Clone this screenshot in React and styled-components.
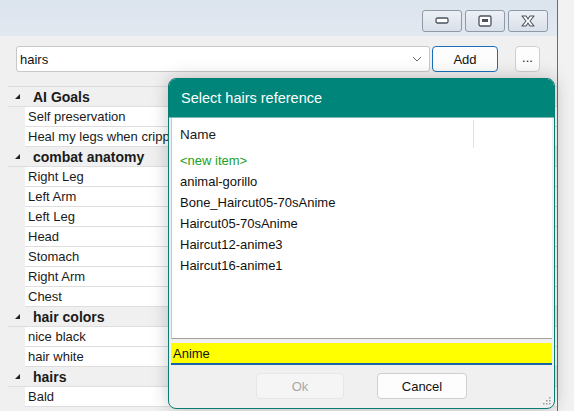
import React from "react";
import styled, { createGlobalStyle } from "styled-components";

const GlobalStyle = createGlobalStyle`
  html, body {
    margin: 0;
    padding: 0;
    background: #f0f0f0;
    font-family: "Liberation Sans", Arial, sans-serif;
  }
`;

const Screen = styled.div`
  position: relative;
  display: flex;
  width: 574px;
  height: 411px;
  overflow: hidden;
  background: linear-gradient(90deg, #e4e4e4, #f2f2f2);
`;

const Window = styled.div`
  width: 557px;
  display: flex;
  flex-direction: column;
  border-right: 1px solid #6c6c6c;
  background: #f0f0f0;
  overflow: hidden;
`;

const TitleBar = styled.div`
  height: 36px;
  flex-shrink: 0;
  box-sizing: border-box;
  display: flex;
  justify-content: flex-end;
  gap: 3px;
  padding: 10px 9px 0 0;
  background: linear-gradient(180deg, #dbe3ec 0%, #e3e9f1 100%);
`;

const CaptionButton = styled.div`
  width: 40px;
  height: 22px;
  box-sizing: border-box;
  border: 1px solid #8f9aa8;
  border-radius: 3px;
  background: linear-gradient(180deg, #edf1f6, #d9e0e9);
  display: flex;
  align-items: center;
  justify-content: center;
`;

const Toolbar = styled.div`
  flex-shrink: 0;
  display: flex;
  align-items: center;
  padding: 10px 0 0 16px;
  height: 26px;
`;

const Combo = styled.div`
  width: 414px;
  height: 26px;
  box-sizing: border-box;
  background: #fff;
  border: 1px solid #c8c8c8;
  border-radius: 3px;
  display: flex;
  align-items: center;
  justify-content: space-between;
  padding: 0 7px 0 3px;
  font-size: 13px;
  color: #111;
`;

const Button = styled.div`
  flex-shrink: 0;
  height: 26px;
  width: ${(p) => p.$w}px;
  margin-left: ${(p) => p.$ml}px;
  box-sizing: border-box;
  border: 1px solid ${(p) => (p.$focus ? "#1a6fb8" : p.$disabled ? "#e6e6e6" : "#cfcfcf")};
  border-radius: 4px;
  background: ${(p) => (p.$disabled ? "#f5f5f5" : "#fdfdfd")};
  color: ${(p) => (p.$disabled ? "#a8a8a8" : "#111")};
  font-size: 13px;
  display: flex;
  align-items: center;
  justify-content: center;
  padding-bottom: ${(p) => (p.$dots ? "4px" : "0")};
`;

const Grid = styled.div`
  flex-shrink: 0;
  margin-top: 14px;
  border-top: 1px solid #dcdcdc;
  margin-left: 8px;
`;

const Row = styled.div`
  height: 20px;
  box-sizing: border-box;
  display: flex;
  align-items: center;
  border-bottom: 1px solid #dedede;
  margin-left: ${(p) => (p.$header ? "0" : "17px")};
  background: ${(p) => (p.$header ? "#f0f0f0" : "#fff")};
  font-size: ${(p) => (p.$header ? "14px" : "13px")};
  font-weight: ${(p) => (p.$header ? "bold" : "normal")};
  color: #1a1a1a;
  padding-left: ${(p) => (p.$header ? "7px" : "3px")};
  white-space: nowrap;
`;

const NameCell = styled.div`
  width: ${(p) => p.$w}px;
  overflow: hidden;
  white-space: nowrap;
`;

const Expander = styled.span`
  flex-shrink: 0;
  width: 0;
  height: 0;
  border-left: 5px solid transparent;
  border-bottom: 5px solid #222;
  margin-right: 13px;
`;

const Dialog = styled.div`
  position: absolute;
  left: 168px;
  top: 78px;
  width: 387px;
  height: 331px;
  box-sizing: border-box;
  border: 1px solid #0a7d73;
  border-radius: 8px;
  background: #f0f0f0;
  box-shadow: 0 0 18px rgba(0, 0, 0, 0.22);
  display: flex;
  flex-direction: column;
  overflow: hidden;
`;

const DialogTitle = styled.div`
  height: 39px;
  box-sizing: border-box;
  flex-shrink: 0;
  background: #00857a;
  color: #fff;
  font-size: 14.5px;
  display: flex;
  align-items: center;
  padding-left: 12px;
  border-bottom: 1px solid #7fb9b3;
`;

const ListBox = styled.div`
  flex-shrink: 0;
  margin: 0 2px;
  height: 220px;
  background: #fff;
  border-bottom: 1px solid #a0a0a0;
  border-left: 1px solid #c8c8c8;
`;

const ListHeader = styled.div`
  height: 32px;
  display: flex;
  align-items: flex-start;
  font-size: 13.5px;
  color: #1a1a1a;
`;

const HeaderCell = styled.div`
  width: 302px;
  height: 28px;
  margin-top: 2px;
  box-sizing: border-box;
  padding-left: 8px;
  display: flex;
  align-items: center;
  border-right: 1px solid #e2e2e2;
`;

const ListItem = styled.div`
  height: 21px;
  display: flex;
  align-items: center;
  padding-left: 8px;
  font-size: 13px;
  color: ${(p) => (p.$new ? "#23a023" : "#111")};
`;

const SearchInput = styled.div`
  flex-shrink: 0;
  margin: 4px 2px 0;
  height: 20px;
  background: #ffff00;
  border-bottom: 2px solid #1565a8;
  font-size: 13px;
  color: #111;
  display: flex;
  align-items: center;
  padding-left: 2px;
`;

const ButtonRow = styled.div`
  display: flex;
  justify-content: center;
  gap: 33px;
  margin-top: 8px;
`;

const Grip = styled.svg`
  position: absolute;
  right: 3px;
  bottom: 3px;
`;

const groups = [
  { title: "AI Goals", items: ["Self preservation", "Heal my legs when crippled"] },
  {
    title: "combat anatomy",
    items: ["Right Leg", "Left Arm", "Left Leg", "Head", "Stomach", "Right Arm", "Chest"],
  },
  { title: "hair colors", items: ["nice black", "hair white"] },
  { title: "hairs", items: ["Bald"] },
  { title: "head & faces", items: [] },
];

const refs = [
  "animal-gorillo",
  "Bone_Haircut05-70sAnime",
  "Haircut05-70sAnime",
  "Haircut12-anime3",
  "Haircut16-anime1",
];

export default function App() {
  return (
    <>
      <GlobalStyle />
      <Screen>
        <Window>
          <TitleBar>
            <CaptionButton>
              <svg width="14" height="8" viewBox="0 0 14 8">
                <rect x="1" y="1" width="12" height="5" rx="1.5" fill="#fff" stroke="#4a5260" strokeWidth="1.3" />
              </svg>
            </CaptionButton>
            <CaptionButton>
              <svg width="14" height="12" viewBox="0 0 14 12">
                <rect x="1" y="1" width="12" height="10" rx="1.5" fill="#fff" stroke="#4a5260" strokeWidth="1.3" />
                <rect x="4" y="4" width="6" height="3" fill="#4a5260" />
              </svg>
            </CaptionButton>
            <CaptionButton>
              <svg width="16" height="12" viewBox="0 0 16 12">
                <path d="M2 1 L6 1 L8 4 L10 1 L14 1 L10 6 L14 11 L10 11 L8 8 L6 11 L2 11 L6 6 Z" fill="#fff" stroke="#4a5260" strokeWidth="1.1" strokeLinejoin="round" />
              </svg>
            </CaptionButton>
          </TitleBar>
          <Toolbar>
            <Combo>
              <span>hairs</span>
              <svg width="10" height="6" viewBox="0 0 10 6">
                <path d="M1 1 L5 5 L9 1" fill="none" stroke="#666" strokeWidth="1" />
              </svg>
            </Combo>
            <Button $w={66} $ml={2} $focus>Add</Button>
            <Button $w={25} $ml={17} $dots>...</Button>
          </Toolbar>
          <Grid>
            {groups.map((g) => (
              <React.Fragment key={g.title}>
                <Row $header>
                  <Expander />
                  <NameCell $w={135}>{g.title}</NameCell>
                </Row>
                {g.items.map((it) => (
                  <Row key={it}>
                    <NameCell $w={140}>{it}</NameCell>
                  </Row>
                ))}
              </React.Fragment>
            ))}
          </Grid>
        </Window>
        <Dialog>
          <DialogTitle>Select hairs reference</DialogTitle>
          <ListBox>
            <ListHeader>
              <HeaderCell>Name</HeaderCell>
            </ListHeader>
            <ListItem $new>&lt;new item&gt;</ListItem>
            {refs.map((r) => (
              <ListItem key={r}>{r}</ListItem>
            ))}
          </ListBox>
          <SearchInput>Anime</SearchInput>
          <ButtonRow>
            <Button $w={88} $ml={0} $disabled>Ok</Button>
            <Button $w={90} $ml={0}>Cancel</Button>
          </ButtonRow>
          <Grip width="10" height="10" viewBox="0 0 10 10">
            {[[8, 2], [8, 5], [5, 5], [8, 8], [5, 8], [2, 8]].map(([x, y]) => (
              <rect key={`${x}-${y}`} x={x} y={y} width="1.5" height="1.5" fill="#9a9a9a" />
            ))}
          </Grip>
        </Dialog>
      </Screen>
    </>
  );
}
